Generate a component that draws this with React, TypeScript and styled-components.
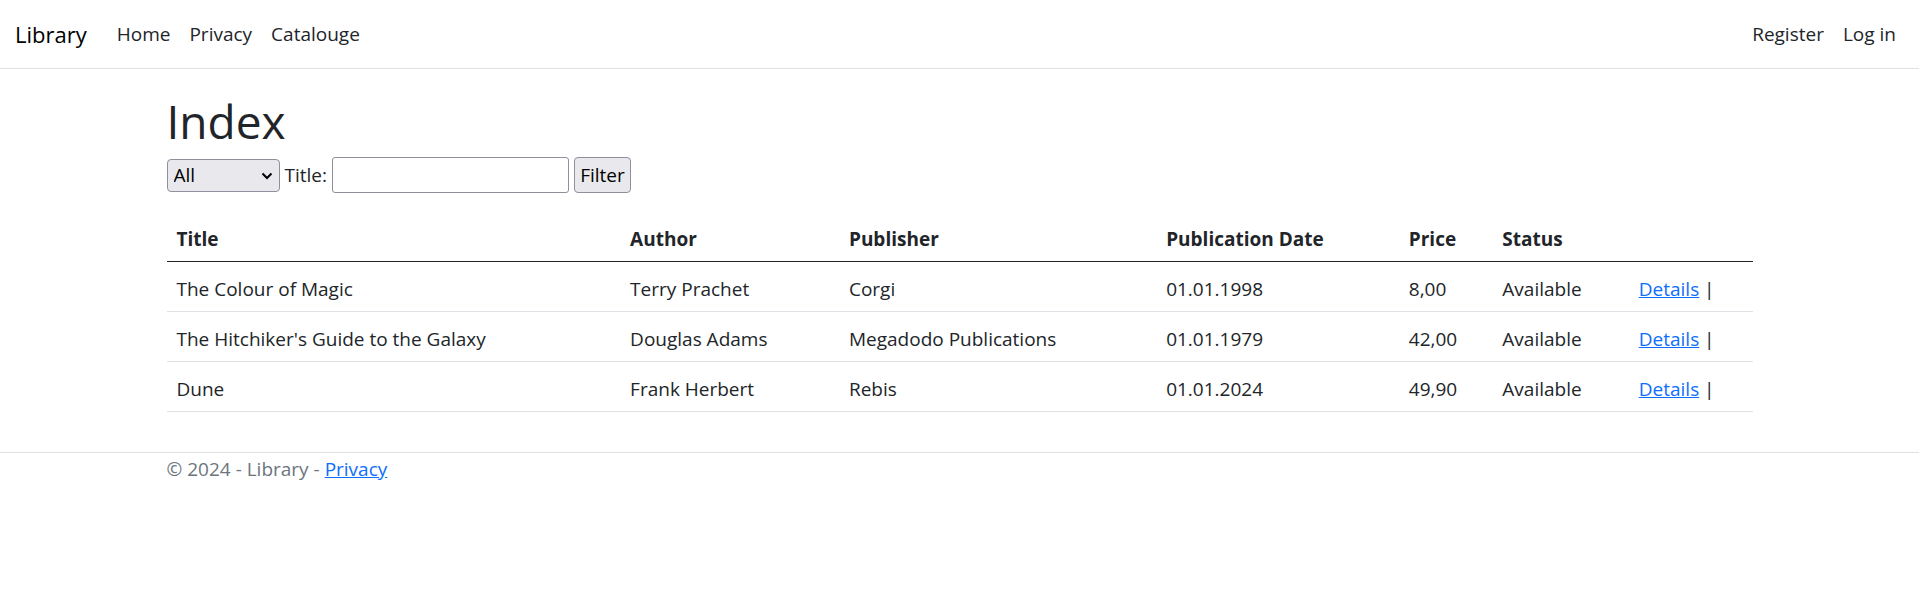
import React from "react";
import styled, { createGlobalStyle } from "styled-components";

const GlobalStyle = createGlobalStyle`
  *, *::before, *::after { box-sizing: border-box; }
  body {
    margin: 0;
    background: #fff;
    color: #212529;
    font-family: "Segoe UI", "Open Sans", "Noto Sans", sans-serif;
    font-size: 19px;
    line-height: 30px;
  }
`;

const Navbar = styled.nav`
  display: flex;
  align-items: center;
  height: 69px;
  padding: 0 23px 0 15px;
  border-bottom: 1px solid #dee2e6;
`;

const Brand = styled.a`
  margin-right: 30px;
  color: #000;
  font-size: 22px;
  text-decoration: none;
`;

const NavList = styled.ul`
  display: flex;
  gap: 19px;
  margin: 0;
  padding: 0;
  list-style: none;

  &:last-child {
    margin-left: auto;
  }
`;

const NavLink = styled.a`
  color: #212529;
  text-decoration: none;
`;

const Container = styled.div`
  max-width: 1586px;
  margin: 0 auto;
`;

const Main = styled.main`
  padding: 22px 0 40px;
`;

const Heading = styled.h1`
  margin: 0 0 6px;
  font-size: 46px;
  font-weight: 400;
  line-height: 60px;
`;

const FilterForm = styled.form`
  display: flex;
  align-items: center;
  gap: 5px;
  margin-bottom: 19px;
`;

const SelectBox = styled.div`
  position: relative;
  display: flex;
`;

const Select = styled.select`
  appearance: none;
  width: 113px;
  height: 33px;
  padding: 0 24px 0 6px;
  border: 1px solid #8f8f9d;
  border-radius: 4px;
  background: #e9e9ed;
  color: #000;
  font: inherit;
`;

const Chevron = styled.svg`
  position: absolute;
  top: 12px;
  right: 7px;
  pointer-events: none;
`;

const TextInput = styled.input`
  width: 237px;
  height: 36px;
  padding: 0 4px;
  border: 1px solid #8f8f9d;
  border-radius: 3px;
  background: #fff;
  font: inherit;
`;

const Button = styled.button`
  width: 57px;
  height: 36px;
  padding: 0;
  border: 1px solid #8f8f9d;
  border-radius: 4px;
  background: #e9e9ed;
  color: #000;
  font: inherit;
`;

const Table = styled.table`
  width: 100%;
  table-layout: fixed;
  border-collapse: separate;
  border-spacing: 0;
`;

const Col = styled.col<{ $share: number }>`
  width: ${(p) => p.$share}%;
`;

const HeadCell = styled.th`
  height: 50px;
  padding: 12px 10px 7px;
  border-bottom: 1px solid #212529;
  text-align: left;
  font-weight: 700;
`;

const Cell = styled.td`
  height: 50px;
  padding: 12px 10px 7px;
  border-bottom: 1px solid #dee2e6;
`;

const Link = styled.a`
  color: #0d6efd;
  text-decoration: underline;
`;

const Footer = styled.footer`
  border-top: 1px solid #dee2e6;
  color: #6c757d;
  line-height: 32px;
`;

const columns = [
  { label: "Title", share: 28.6 },
  { label: "Author", share: 13.8 },
  { label: "Publisher", share: 20 },
  { label: "Publication Date", share: 15.3 },
  { label: "Price", share: 5.9 },
  { label: "Status", share: 8.6 },
  { label: "", share: 7.8 },
];

const books = [
  ["The Colour of Magic", "Terry Prachet", "Corgi", "01.01.1998", "8,00", "Available"],
  ["The Hitchiker's Guide to the Galaxy", "Douglas Adams", "Megadodo Publications", "01.01.1979", "42,00", "Available"],
  ["Dune", "Frank Herbert", "Rebis", "01.01.2024", "49,90", "Available"],
];

export default function App() {
  return (
    <>
      <GlobalStyle />
      <header>
        <Navbar>
          <Brand href="#">Library</Brand>
          <NavList>
            <li><NavLink href="#">Home</NavLink></li>
            <li><NavLink href="#">Privacy</NavLink></li>
            <li><NavLink href="#">Catalouge</NavLink></li>
          </NavList>
          <NavList>
            <li><NavLink href="#">Register</NavLink></li>
            <li><NavLink href="#">Log in</NavLink></li>
          </NavList>
        </Navbar>
      </header>
      <Container>
        <Main>
          <Heading>Index</Heading>
          <FilterForm onSubmit={(e) => e.preventDefault()}>
            <SelectBox>
              <Select aria-label="Status">
                <option>All</option>
                <option>Available</option>
              </Select>
              <Chevron width="12" height="10" viewBox="0 0 12 10" fill="none" stroke="#000" strokeWidth="2" aria-hidden="true">
                <path d="M1.5 2.5 L6 7 L10.5 2.5" />
              </Chevron>
            </SelectBox>
            <label htmlFor="title">Title:</label>
            <TextInput id="title" type="text" />
            <Button type="submit">Filter</Button>
          </FilterForm>
          <Table>
            <colgroup>
              {columns.map((c) => <Col key={c.label} $share={c.share} />)}
            </colgroup>
            <thead>
              <tr>
                {columns.map((c) => <HeadCell key={c.label} scope="col">{c.label}</HeadCell>)}
              </tr>
            </thead>
            <tbody>
              {books.map((book) => (
                <tr key={book[0]}>
                  {book.map((value) => <Cell key={value}>{value}</Cell>)}
                  <Cell><Link href="#">Details</Link> |</Cell>
                </tr>
              ))}
            </tbody>
          </Table>
        </Main>
      </Container>
      <Footer>
        <Container>
          © 2024 - Library - <Link href="#">Privacy</Link>
        </Container>
      </Footer>
    </>
  );
}
